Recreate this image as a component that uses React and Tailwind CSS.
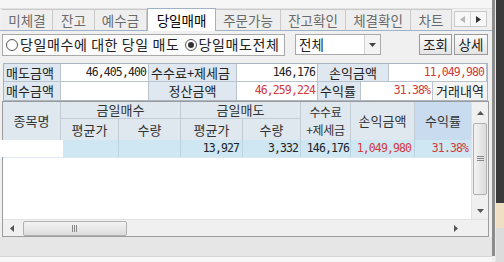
import React from 'react';

const KR = { fontFamily: '"Noto Sans CJK KR", "Noto Sans", sans-serif' };
const NUM = { fontFamily: '"DejaVu Sans Mono", "Liberation Mono", monospace' };

function Tab({ label, w, active }) {
  if (active) {
    return (
      <div className={`${w} h-[23px] -mb-px bg-white border border-b-0 border-[#9fb3c8] flex items-center justify-center text-[13.5px] text-black z-10`}>
        {label}
      </div>
    );
  }
  return (
    <div className={`${w} h-[21px] border-r border-t border-[#c9c9c9] bg-[#eeeeee] flex items-center justify-center text-[13.5px] text-[#6a6a6a]`}>
      {label}
    </div>
  );
}

function Radio({ checked }) {
  return (
    <span className="shrink-0 inline-flex w-[12px] h-[12px] rounded-full border border-[#555] bg-white items-center justify-center mr-[2px]">
      {checked && <span className="w-[6px] h-[6px] rounded-full bg-[#333]" />}
    </span>
  );
}

function Label({ w, children, align = 'justify-start' }) {
  return (
    <div className={`${w} h-full bg-[#dfe7f0] border-r border-[#b9c4ce] flex items-center ${align} px-[2px] text-[13px] text-[#222] whitespace-nowrap`}>
      {children}
    </div>
  );
}

function Value({ w, children, red }) {
  return (
    <div className={`${w} h-full bg-white border-r border-[#b9c4ce] flex items-center justify-end px-[2px] text-[11.5px] tracking-[-0.9px] ${red ? 'text-[#d23a3a]' : 'text-[#222]'}`} style={NUM}>
      {children}
    </div>
  );
}

export default function App() {
  return (
    <div className="w-[504px] h-[262px] overflow-hidden flex bg-[#f0f0f0] text-[#222]" style={KR}>
      {/* main window */}
      <div className="w-[492px] h-full flex flex-col">
        <div className="h-[9px] bg-[#f6f6f6] border-b border-[#e2e2e2]" />

        {/* tabs */}
        <div className="h-[22px] flex items-end pl-[2px] border-b border-[#9fb3c8] relative">
          <Tab label="미체결" w="w-[51px]" />
          <Tab label="잔고" w="w-[42px]" />
          <Tab label="예수금" w="w-[52px]" />
          <Tab label="당일매매" w="w-[69px]" active />
          <Tab label="주문가능" w="w-[65px]" />
          <Tab label="잔고확인" w="w-[65px]" />
          <Tab label="체결확인" w="w-[65px]" />
          <Tab label="차트" w="w-[41px]" />
          <div className="ml-[2px] mb-[3px] w-[33px] h-[16px] border border-[#c9c9c9] bg-[#f7f7f7] flex">
            <div className="flex-1 flex items-center justify-center border-r border-[#d5d5d5]">
              <svg width="5" height="7" viewBox="0 0 5 7"><path d="M5 0L0 3.5L5 7z" fill="#b5b5b5" /></svg>
            </div>
            <div className="flex-1 flex items-center justify-center">
              <svg width="5" height="7" viewBox="0 0 5 7"><path d="M0 0L5 3.5L0 7z" fill="#333" /></svg>
            </div>
          </div>
        </div>

        {/* radio / filter row */}
        <div className="h-[27px] flex items-center pl-[2px] pr-[4px]">
          <div className="w-[283px] h-[22px] border border-[#a9a9a9] bg-[#fbfbfb] flex items-center pl-[3px] text-[14px] tracking-[0.6px] whitespace-nowrap overflow-hidden">
            <Radio />
            <span className="mr-[5px]">당일매수에 대한 당일 매도</span>
            <Radio checked />
            <span>당일매도전체</span>
          </div>
          <div className="ml-[10px] w-[86px] h-[21px] border border-[#a9a9a9] bg-white flex">
            <div className="flex-1 flex items-center pl-[3px] text-[13.5px]">전체</div>
            <div className="w-[16px] border-l border-[#d0d0d0] bg-[#f4f4f4] flex items-center justify-center">
              <svg width="7" height="4" viewBox="0 0 7 4"><path d="M0 0H7L3.5 4z" fill="#444" /></svg>
            </div>
          </div>
          <div className="ml-auto flex gap-[2px]">
            <div className="w-[33px] h-[21px] border border-[#9a9a9a] bg-gradient-to-b from-[#fbfbfb] to-[#e4e4e4] flex items-center justify-center text-[13.5px]">조회</div>
            <div className="w-[34px] h-[21px] border border-[#9a9a9a] bg-gradient-to-b from-[#fbfbfb] to-[#e4e4e4] flex items-center justify-center text-[13.5px]">상세</div>
          </div>
        </div>

        {/* summary table */}
        <div className="mt-[5px] ml-[3px] w-[485px] border border-[#a9b4bf] bg-white">
          <div className="h-[18px] flex border-b border-[#b9c4ce]">
            <Label w="w-[57px]">매도금액</Label>
            <Value w="w-[88px]">46,405,400</Value>
            <Label w="w-[88px]">수수료+제세금</Label>
            <Value w="w-[81px]">146,176</Value>
            <Label w="w-[71px]" align="justify-center">손익금액</Label>
            <Value w="flex-1" red>11,049,980</Value>
          </div>
          <div className="h-[18px] flex">
            <Label w="w-[57px]">매수금액</Label>
            <Value w="w-[88px]" />
            <Label w="w-[88px]" align="justify-center">정산금액</Label>
            <Value w="w-[81px]" red>46,259,224</Value>
            <Label w="w-[43px]">수익률</Label>
            <Value w="w-[72px]" red>31.38%</Value>
            <div className="flex-1 h-full bg-[#f4f4f4] flex items-center justify-center text-[13px]">거래내역</div>
          </div>
        </div>

        {/* grid */}
        <div className="ml-[2px] w-[487px] h-[136px] border border-[#9c9c9c] bg-white flex flex-col">
          <div className="flex flex-1 min-h-0">
            <div className="w-[468px] flex flex-col text-[13px]">
              {/* header */}
              <div className="h-[38px] flex bg-[#dfe7ef] text-[#333]">
                <div className="w-[58px] border-r border-[#c3ccd5] flex items-center justify-center">종목명</div>
                <div className="w-[120px] border-r border-[#c3ccd5] flex flex-col">
                  <div className="h-[17px] border-b border-[#c3ccd5] flex items-center justify-center">금일매수</div>
                  <div className="flex-1 flex">
                    <div className="w-[58px] border-r border-[#c3ccd5] flex items-center justify-center">평균가</div>
                    <div className="flex-1 flex items-center justify-center">수량</div>
                  </div>
                </div>
                <div className="w-[120px] border-r border-[#c3ccd5] flex flex-col">
                  <div className="h-[17px] border-b border-[#c3ccd5] flex items-center justify-center">금일매도</div>
                  <div className="flex-1 flex">
                    <div className="w-[62px] border-r border-[#c3ccd5] flex items-center justify-center">평균가</div>
                    <div className="flex-1 flex items-center justify-center">수량</div>
                  </div>
                </div>
                <div className="w-[50px] border-r border-[#c3ccd5] flex items-center justify-center text-center text-[12px] leading-[18px] tracking-[-0.3px]">
                  수수료<br />+제세금
                </div>
                <div className="w-[64px] border-r border-[#c3ccd5] flex items-center justify-center">손익금액</div>
                <div className="flex-1 bg-[#c9dcef] flex items-center justify-center">수익률</div>
              </div>
              {/* data row */}
              <div className="h-[18px] flex bg-[#cfe6f3] border-b border-[#dde9f0] text-[11.5px] tracking-[-0.9px]" style={NUM}>
                <div className="w-[63px] -ml-[3px] bg-white" />
                <div className="w-[56px] border-r border-[#bcd3e0]" />
                <div className="w-[62px] border-r border-[#bcd3e0]" />
                <div className="w-[62px] border-r border-[#bcd3e0] flex items-center justify-end pr-[3px]">13,927</div>
                <div className="w-[58px] border-r border-[#bcd3e0] flex items-center justify-end pr-[2px]">3,332</div>
                <div className="w-[50px] border-r border-[#bcd3e0] flex items-center justify-end pr-[1px]">146,176</div>
                <div className="w-[64px] border-r border-[#bcd3e0] flex items-center justify-end pr-[3px] text-[#d23a3a]">1,049,980</div>
                <div className="flex-1 flex items-center justify-end pr-[3px] text-[#d23a3a]">31.38%</div>
              </div>
            </div>
            {/* vertical scrollbar */}
            <div className="w-[17px] bg-[#f0f0f0] border-l border-[#e2e2e2] flex flex-col items-center">
              <div className="h-[21px] flex items-center justify-center">
                <svg width="7" height="4" viewBox="0 0 7 4"><path d="M0 4H7L3.5 0z" fill="#555" /></svg>
              </div>
              <div className="w-[14px] h-[72px] border border-[#b0b0b0] rounded-[2px] bg-gradient-to-r from-[#f3f3f3] to-[#dcdcdc] flex items-center justify-center">
                <svg width="7" height="6" viewBox="0 0 7 6"><path d="M0 0.5H7M0 2.5H7M0 4.5H7" stroke="#888" strokeWidth="1" /></svg>
              </div>
              <div className="flex-1" />
              <div className="h-[17px] flex items-center justify-center">
                <svg width="7" height="4" viewBox="0 0 7 4"><path d="M0 0H7L3.5 4z" fill="#555" /></svg>
              </div>
            </div>
          </div>
          {/* horizontal scrollbar */}
          <div className="h-[17px] flex items-center bg-[#f0f0f0] border-t border-[#e2e2e2]">
            <div className="w-[17px] flex items-center justify-center">
              <svg width="4" height="7" viewBox="0 0 4 7"><path d="M4 0L0 3.5L4 7z" fill="#555" /></svg>
            </div>
            <div className="ml-[3px] w-[104px] h-[15px] border border-[#b0b0b0] rounded-[2px] bg-gradient-to-b from-[#f3f3f3] to-[#dcdcdc] flex items-center justify-center">
              <svg width="6" height="7" viewBox="0 0 6 7"><path d="M0.5 0V7M2.5 0V7M4.5 0V7" stroke="#888" strokeWidth="1" /></svg>
            </div>
            <div className="flex-1" />
            <div className="w-[17px] mr-[24px] flex items-center justify-center">
              <svg width="4" height="7" viewBox="0 0 4 7"><path d="M0 0L4 3.5L0 7z" fill="#555" /></svg>
            </div>
          </div>
        </div>

        <div className="flex-1 bg-[#e6e6e6]" />
        <div className="h-[6px] bg-[#f7f7f7] border-t border-[#d6d6d6]" />
      </div>

      {/* right edge */}
      <div className="w-[3px] h-[256px] bg-[#8c8c8c]" />
      <div className="w-[1px] h-full bg-[#e9e9e9]" />
      <div className="flex-1 flex flex-col">
        <div className="h-[203px] bg-[#3a3a3a]" />
        <div className="h-[25px] bg-[#efdfc4]" />
        <div className="flex-1 bg-[#dcdcdc]" />
      </div>
    </div>
  );
}
